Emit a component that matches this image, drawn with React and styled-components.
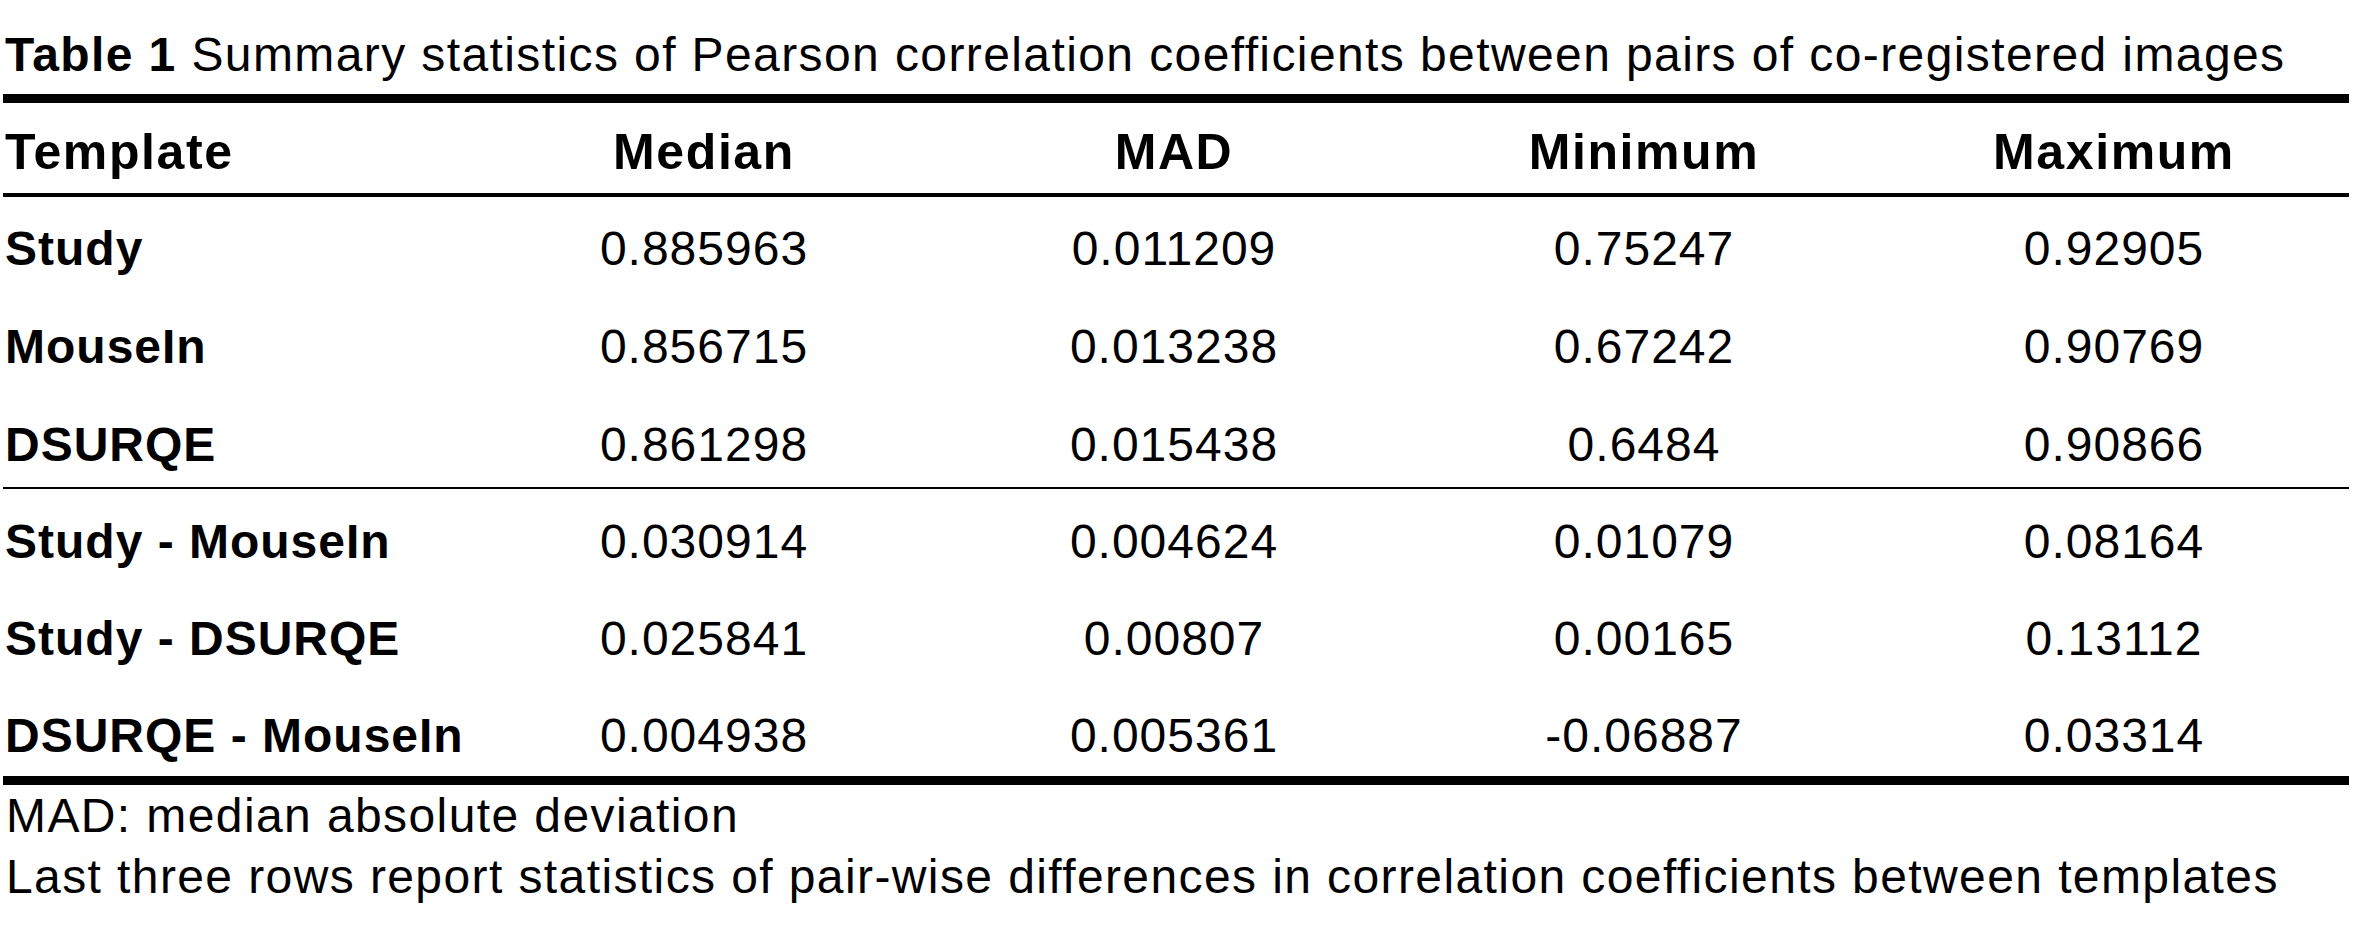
import React from "react";
import styled, { createGlobalStyle } from "styled-components";

const GlobalStyle = createGlobalStyle`
  html, body {
    margin: 0;
    padding: 0;
    background: #ffffff;
  }
  body {
    font-family: "Liberation Sans", Arial, Helvetica, sans-serif;
    color: #000000;
  }
`;

const Page = styled.div`
  width: 2346px;
  margin-left: 3px;
  padding-top: 28px;
  font-size: 48px;
  line-height: 54px;
`;

const Caption = styled.div`
  padding-left: 2px;
  white-space: nowrap;
  letter-spacing: 1.4px;
  margin-bottom: 12px;
`;

const Bold = styled.span`
  font-weight: 700;
`;

const Rule = styled.div`
  height: ${(p) => p.size}px;
  background: #000000;
`;

const Group = styled.div`
  display: flex;
  flex-direction: column;
  gap: ${(p) => p.gap || 0}px;
  padding-top: ${(p) => p.top}px;
  padding-bottom: ${(p) => p.bottom}px;
`;

const Row = styled.div`
  display: grid;
  grid-template-columns: 466px repeat(4, 470px);
  height: 54px;
  font-weight: ${(p) => (p.head ? 700 : 400)};
  font-size: ${(p) => (p.head ? 50 : 48)}px;
  letter-spacing: ${(p) => (p.head ? 1.6 : 1)}px;
`;

const Label = styled.div`
  padding-left: 2px;
  font-weight: 700;
  white-space: nowrap;
`;

const Cell = styled.div`
  text-align: center;
  white-space: nowrap;
`;

const Notes = styled.div`
  padding-left: 3px;
  line-height: 61px;
  letter-spacing: 1.4px;
  white-space: nowrap;
`;

const columns = ["Median", "MAD", "Minimum", "Maximum"];

const templates = [
  ["Study", "0.885963", "0.011209", "0.75247", "0.92905"],
  ["MouseIn", "0.856715", "0.013238", "0.67242", "0.90769"],
  ["DSURQE", "0.861298", "0.015438", "0.6484", "0.90866"],
];

const differences = [
  ["Study - MouseIn", "0.030914", "0.004624", "0.01079", "0.08164"],
  ["Study - DSURQE", "0.025841", "0.00807", "0.00165", "0.13112"],
  ["DSURQE - MouseIn", "0.004938", "0.005361", "-0.06887", "0.03314"],
];

const DataRow = ({ row }) => (
  <Row>
    <Label>{row[0]}</Label>
    {row.slice(1).map((v, i) => (
      <Cell key={i}>{v}</Cell>
    ))}
  </Row>
);

const App = () => {
  return (
    <>
      <GlobalStyle />
      <Page>
        <Caption>
          <Bold>Table 1</Bold> Summary statistics of Pearson correlation
          coefficients between pairs of co-registered images
        </Caption>
        <Rule size={9} />
        <Group top={22} bottom={14}>
          <Row head>
            <Label>Template</Label>
            {columns.map((c) => (
              <Cell key={c}>{c}</Cell>
            ))}
          </Row>
        </Group>
        <Rule size={4} />
        <Group top={25} bottom={15} gap={44}>
          {templates.map((r) => (
            <DataRow key={r[0]} row={r} />
          ))}
        </Group>
        <Rule size={2} />
        <Group top={26} bottom={13} gap={43}>
          {differences.map((r) => (
            <DataRow key={r[0]} row={r} />
          ))}
        </Group>
        <Rule size={9} />
        <Notes>
          <div>MAD: median absolute deviation</div>
          <div>
            Last three rows report statistics of pair-wise differences in
            correlation coefficients between templates
          </div>
        </Notes>
      </Page>
    </>
  );
};

export default App;
